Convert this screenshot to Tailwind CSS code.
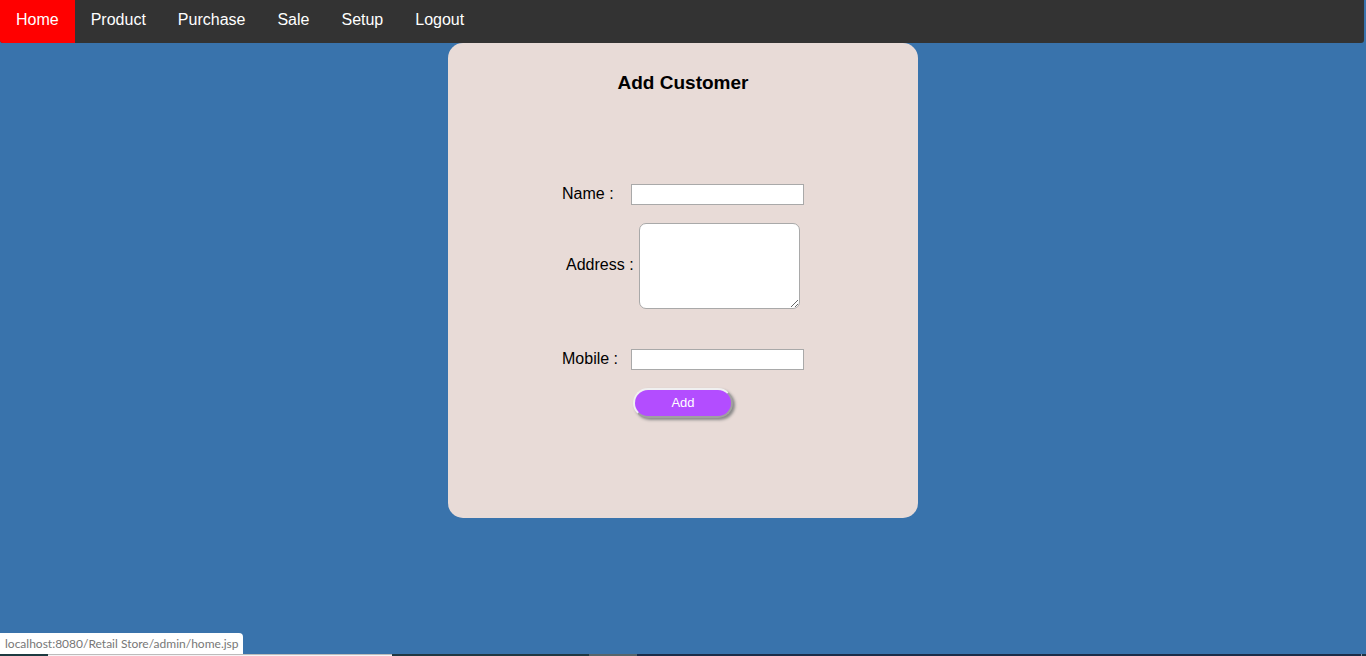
<!DOCTYPE html>
<html lang="en">
<head>
<meta charset="utf-8">
<meta name="viewport" content="width=device-width, initial-scale=1">
<title>Add Customer</title>
<script src="https://cdn.jsdelivr.net/npm/@tailwindcss/browser@4"></script>
</head>
<body class="flex min-h-screen flex-col overflow-x-hidden bg-[#3973ac] font-['Liberation_Sans',Arial,sans-serif] text-base text-black">
  <nav class="mr-0.5 overflow-hidden rounded-b-[3px] bg-[#333333]">
    <ul class="flex h-[43px] text-white">
      <li><a href="#" class="block h-full bg-[#ff0000] px-4 pt-2 leading-6">Home</a></li>
      <li><a href="#" class="block px-4 pt-2 leading-6">Product</a></li>
      <li><a href="#" class="block px-4 pt-2 leading-6">Purchase</a></li>
      <li><a href="#" class="block px-4 pt-2 leading-6">Sale</a></li>
      <li><a href="#" class="block px-4 pt-2 leading-6">Setup</a></li>
      <li><a href="#" class="block px-4 pt-2 leading-6">Logout</a></li>
    </ul>
  </nav>

  <main class="flex-1">
    <form class="mx-auto w-full max-w-[470px] rounded-[15px] bg-[#e8dbd7] pt-7 pb-[100px]">
      <h1 class="text-center text-[19px] leading-6 font-bold">Add Customer</h1>
      <div class="mx-auto mt-[89px] w-[242px]">
        <div class="flex items-start">
          <label for="name" class="w-[69px] leading-5">Name :</label>
          <input id="name" type="text" class="h-[21px] w-[173px] border border-[#a9a9a9] bg-white px-px text-[13px]">
        </div>
        <div class="mt-[18px] flex items-center pl-1">
          <label for="address" class="w-[73px] pb-0.5 leading-5">Address :</label>
          <textarea id="address" class="h-[86px] w-[161px] rounded-[7px] border border-[#a9a9a9] bg-white p-0.5 text-[13px]"></textarea>
        </div>
        <div class="mt-10 flex items-start">
          <label for="mobile" class="w-[69px] leading-5">Mobile :</label>
          <input id="mobile" type="text" class="h-[21px] w-[173px] border border-[#a9a9a9] bg-white px-px text-[13px]">
        </div>
        <button type="button" class="mt-[18px] ml-[71px] block h-[30px] w-[100px] rounded-[15px] border-2 border-t-[#f0f0f0] border-r-[#a0a0a0] border-b-[#a0a0a0] border-l-[#f0f0f0] bg-[#b34dff] text-[13px] leading-4 text-white shadow-[2px_2px_3px_#888888]">Add</button>
      </div>
    </form>
  </main>

  <footer class="fixed inset-x-0 bottom-0">
    <div class="h-[21px] w-[243px] rounded-tr-[4px] bg-white pl-[5px] font-[Lato,sans-serif] text-xs leading-[22px] whitespace-nowrap text-[#777777]">localhost:8080/Retail Store/admin/home.jsp</div>
    <div class="flex h-0.5 bg-[#1e3445]">
      <span class="w-12 bg-[#1c3a40]"></span>
      <span class="w-[344px] border-t border-[#bcbcbc] bg-[#f5f3f5]"></span>
      <span class="w-[197px] bg-[#203842]"></span>
      <span class="w-12 bg-[#56656b]"></span>
      <span class="flex-1 bg-[#1b2c48]"></span>
      <span class="mr-1 w-px bg-[#8c96a5]"></span>
    </div>
  </footer>
</body>
</html>
